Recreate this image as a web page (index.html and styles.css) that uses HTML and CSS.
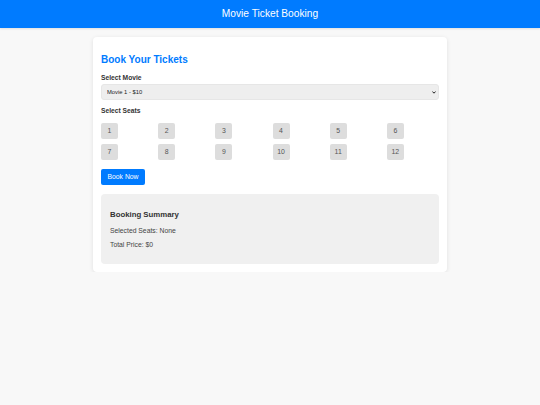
FILE: index.html
```html
<!DOCTYPE html>
<html lang="en">
<head>
    <meta charset="UTF-8">
    <meta name="viewport" content="width=device-width, initial-scale=1.0">
    <title>Movie Ticket Booking</title>
    <link rel="stylesheet" href="styles.css">
</head>
<body>
    <header class="header">
        <h1>Movie Ticket Booking</h1>
    </header>

    <div class="container">
        <div class="card">
            <h2>Book Your Tickets</h2>

            <label class="field-label" for="movie">Select Movie</label>
            <div class="select-wrap">
                <select id="movie" class="movie-select">
                    <option value="10">Movie 1 - $10</option>
                    <option value="12">Movie 2 - $12</option>
                    <option value="8">Movie 3 - $8</option>
                </select>
                <svg class="select-arrow" width="4" height="3" viewBox="0 0 4 3">
                    <path d="M0.4 0.5 L2 2.2 L3.6 0.5" fill="none" stroke="#222" stroke-width="1"/>
                </svg>
            </div>

            <label class="field-label seats-label">Select Seats</label>
            <div class="seat-grid">
                <button class="seat">1</button>
                <button class="seat">2</button>
                <button class="seat">3</button>
                <button class="seat">4</button>
                <button class="seat">5</button>
                <button class="seat">6</button>
                <button class="seat">7</button>
                <button class="seat">8</button>
                <button class="seat">9</button>
                <button class="seat">10</button>
                <button class="seat">11</button>
                <button class="seat">12</button>
            </div>

            <button class="book-btn">Book Now</button>

            <div class="summary">
                <h3>Booking Summary</h3>
                <p>Selected Seats: <span id="selectedSeats">None</span></p>
                <p>Total Price: $<span id="totalPrice">0</span></p>
            </div>
        </div>
    </div>
</body>
</html>
```

FILE: styles.css
```css
body {
    font-family: Arial, "Liberation Sans", sans-serif;
    margin: 0;
    padding: 0;
    background-color: #f8f8f8;
    color: #333;
}
.header {
    background-color: #007bff;
    color: white;
    text-align: center;
    padding: 8px 0;
    box-shadow: 0 1px 2px rgba(0, 0, 0, 0.1);
}
.header h1 {
    margin: 0;
    font-size: 10.2px;
    font-weight: normal;
    line-height: 12px;
}
.container {
    width: 354px;
    margin: 9px auto 0;
}
.card {
    background-color: white;
    border-radius: 4px;
    padding: 8px;
    box-shadow: 0 1px 4px rgba(0, 0, 0, 0.1);
}
.card h2 {
    margin: 9px 0 8px;
    font-size: 10px;
    line-height: 12px;
    color: #007bff;
}
.field-label {
    display: block;
    font-size: 6.7px;
    line-height: 8px;
    font-weight: bold;
    margin-bottom: 2px;
}
.select-wrap {
    position: relative;
}
.movie-select {
    display: block;
    width: 100%;
    height: 16px;
    -webkit-appearance: none;
    appearance: none;
    font-family: Arial, "Liberation Sans", sans-serif;
    font-size: 5.8px;
    background-color: #eee;
    border: 1px solid #e6e6e6;
    border-radius: 3px;
    padding: 0 5px;
    color: #222;
}
.select-arrow {
    position: absolute;
    right: 3px;
    top: 6.5px;
    pointer-events: none;
}
.seats-label {
    margin-top: 6.5px;
    margin-bottom: 8px;
}
.seat-grid {
    display: grid;
    grid-template-columns: repeat(6, 1fr);
    gap: 4.5px 5px;
}
.seat {
    width: 17px;
    height: 16.5px;
    padding: 0;
    border: none;
    border-radius: 2px;
    background-color: #ddd;
    color: #555;
    font-family: Arial, "Liberation Sans", sans-serif;
    font-size: 6.9px;
    cursor: pointer;
}
.book-btn {
    display: block;
    margin-top: 8.5px;
    height: 16px;
    padding: 0 6.5px;
    border: none;
    border-radius: 2px;
    background-color: #007bff;
    color: white;
    font-family: Arial, "Liberation Sans", sans-serif;
    font-size: 6.8px;
    cursor: pointer;
}
.summary {
    margin-top: 9px;
    background-color: #f0f0f0;
    border-radius: 4px;
    padding: 9px;
}
.summary h3 {
    margin: 7px 0 8px;
    font-size: 7.8px;
    line-height: 9px;
}
.summary p {
    margin: 6.5px 0 0;
    font-size: 6.8px;
    line-height: 8px;
    color: #444;
}
.summary p:first-of-type {
    margin-top: 0;
}
.summary p:last-child {
    margin-bottom: 6px;
}
```
